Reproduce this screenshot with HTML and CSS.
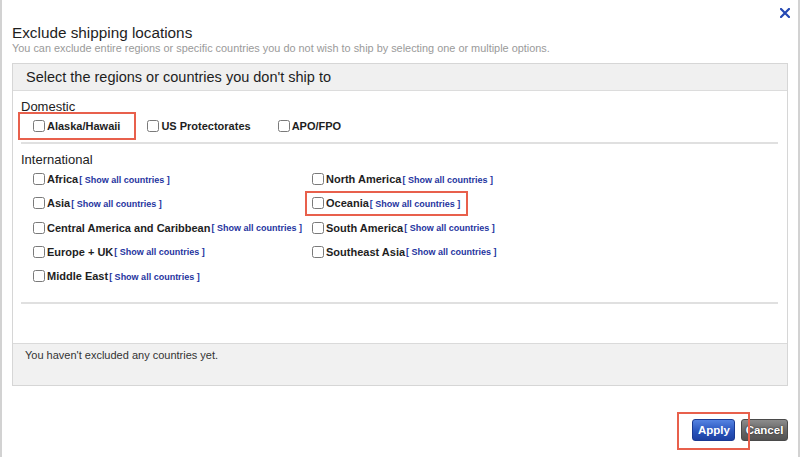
FILE: index.html
```html
<!DOCTYPE html>
<html lang="en">
<head>
<meta charset="utf-8">
<title>Exclude shipping locations</title>
<link rel="stylesheet" href="styles.css">
</head>
<body>
<div class="dialog">
  <div class="topbar">
    <button class="close" aria-label="Close">
      <svg width="10" height="10" viewBox="0 0 10 10"><path d="M1 1 L9 9 M9 1 L1 9" stroke="#2448b3" stroke-width="2.2" stroke-linecap="square" fill="none"/></svg>
    </button>
  </div>
  <h1 class="title">Exclude shipping locations</h1>
  <p class="subtitle">You can exclude entire regions or specific countries you do not wish to ship by selecting one or multiple options.</p>

  <section class="panel">
    <div class="panel-head">Select the regions or countries you don't ship to</div>
    <div class="panel-body">
      <div class="group-label">Domestic</div>
      <div class="domestic-row">
        <label class="opt annot annot-alaska"><span class="cb"></span><span class="name">Alaska/Hawaii</span></label>
        <label class="opt"><span class="cb"></span><span class="name">US Protectorates</span></label>
        <label class="opt"><span class="cb"></span><span class="name">APO/FPO</span></label>
      </div>
      <div class="sep"></div>
      <div class="group-label intl">International</div>
      <div class="intl-grid">
        <label class="opt"><span class="cb"></span><span class="name">Africa</span><a class="more">[ Show all countries ]</a></label>
        <label class="opt"><span class="cb"></span><span class="name">Asia</span><a class="more">[ Show all countries ]</a></label>
        <label class="opt"><span class="cb"></span><span class="name">Central America and Caribbean</span><a class="more">[ Show all countries ]</a></label>
        <label class="opt"><span class="cb"></span><span class="name">Europe + UK</span><a class="more">[ Show all countries ]</a></label>
        <label class="opt"><span class="cb"></span><span class="name">Middle East</span><a class="more">[ Show all countries ]</a></label>
        <label class="opt"><span class="cb"></span><span class="name">North America</span><a class="more">[ Show all countries ]</a></label>
        <label class="opt annot annot-oceania"><span class="cb"></span><span class="name">Oceania</span><a class="more">[ Show all countries ]</a></label>
        <label class="opt"><span class="cb"></span><span class="name">South America</span><a class="more">[ Show all countries ]</a></label>
        <label class="opt"><span class="cb"></span><span class="name">Southeast Asia</span><a class="more">[ Show all countries ]</a></label>
      </div>
      <div class="sep sep-bottom"></div>
    </div>
    <div class="panel-foot">You haven't excluded any countries yet.</div>
  </section>

  <div class="actions">
    <button class="btn btn-apply annot annot-apply">Apply</button>
    <button class="btn btn-cancel">Cancel</button>
  </div>
</div>
</body>
</html>
```

FILE: styles.css
```css
* { box-sizing: border-box; }

html, body {
  margin: 0;
  padding: 0;
  background: #ffffff;
}

body {
  font-family: "Liberation Sans", Arial, Helvetica, sans-serif;
  color: #222;
}

.dialog {
  width: 800px;
  height: 457px;
  border-left: 2px solid #d2d2d2;
  border-right: 2px solid #d2d2d2;
  padding: 0 10px;
  display: flex;
  flex-direction: column;
}

.topbar {
  height: 24px;
  padding-top: 8px;
  display: flex;
  justify-content: flex-end;
}

.close {
  border: 0;
  background: none;
  padding: 0;
  margin-right: -2px;
  width: 10px;
  height: 10px;
  display: flex;
  cursor: pointer;
}

.title {
  margin: 0;
  font-size: 15.3px;
  line-height: 18px;
  font-weight: normal;
  color: #1e1e1e;
}

.subtitle {
  margin: 0;
  font-size: 10.9px;
  line-height: 13px;
  color: #9a9a9a;
}

.panel {
  margin-top: 8px;
  border: 1px solid #d6d6d6;
  display: flex;
  flex-direction: column;
}

.panel-head {
  height: 27px;
  background: #f0f0f0;
  border-bottom: 1px solid #dcdcdc;
  display: flex;
  align-items: center;
  padding-left: 13px;
  font-size: 14.5px;
  color: #1e1e1e;
}

.panel-body {
  padding: 8px 9px 39px 8px;
}

.group-label {
  font-size: 13px;
  line-height: 15px;
  color: #222;
}

.group-label.intl {
  margin-top: 8px;
}

.domestic-row {
  display: flex;
  gap: 27px;
  height: 24px;
  align-items: center;
  padding-left: 12px;
}

.opt {
  position: relative;
  display: flex;
  align-items: center;
  height: 14px;
  white-space: nowrap;
}

.cb {
  width: 12px;
  height: 12px;
  border: 1px solid #7a7a7a;
  border-radius: 2.5px;
  background: #fff;
  margin-right: 2px;
  flex: none;
}

.name {
  font-size: 11px;
  line-height: 14px;
  font-weight: bold;
  color: #1e1e1e;
}

.more {
  font-size: 9px;
  line-height: 14px;
  font-weight: bold;
  color: #1f35a0;
  margin-left: 1px;
  padding-top: 1px;
  cursor: pointer;
}

.sep {
  height: 2px;
  background: #e0e0e0;
  margin-top: 4px;
}

.sep-bottom {
  margin-top: 14px;
}

.intl-grid {
  display: grid;
  grid-template-columns: 279px 279px;
  grid-template-rows: repeat(5, 24px);
  row-gap: 0.3px;
  grid-auto-flow: column;
  padding-left: 12px;
}

.intl-grid .opt {
  justify-self: start;
  align-self: center;
}

.panel-foot {
  height: 42px;
  background: #f1f1f1;
  border-top: 1px solid #dadada;
  padding: 5px 12px;
  font-size: 11px;
  line-height: 13px;
  color: #333;
}

.actions {
  margin-top: 33px;
  display: flex;
  justify-content: flex-end;
  gap: 6px;
}

.btn {
  height: 22px;
  border-radius: 3px;
  font-family: "Liberation Sans", Arial, sans-serif;
  font-size: 11.5px;
  font-weight: bold;
  color: #fff;
  padding: 0 5px;
  cursor: pointer;
}

.btn-apply {
  width: 43px;
  border: 1px solid #1a3a92;
  background: linear-gradient(#5583e2, #2a55bd 55%, #1d40a2);
}

.btn-cancel {
  width: 47px;
  border: 1px solid #4a4a4a;
  background: linear-gradient(#8c8c8c, #666 55%, #525252);
  text-shadow: 0 0 2px #222;
  padding: 0 2px;
}

/* red annotation boxes drawn over the screenshot */
.annot::after {
  content: "";
  position: absolute;
  border: 2px solid #e8604c;
  pointer-events: none;
}

.annot-alaska::after {
  left: -15px;
  right: -16px;
  top: -7px;
  bottom: -7px;
}

.annot-oceania::after {
  left: -7px;
  right: -8px;
  top: -5px;
  bottom: -6px;
}

.btn.annot-apply {
  position: relative;
}

.annot-apply::after {
  left: -16px;
  right: -16px;
  top: -8px;
  bottom: -10px;
}
```
